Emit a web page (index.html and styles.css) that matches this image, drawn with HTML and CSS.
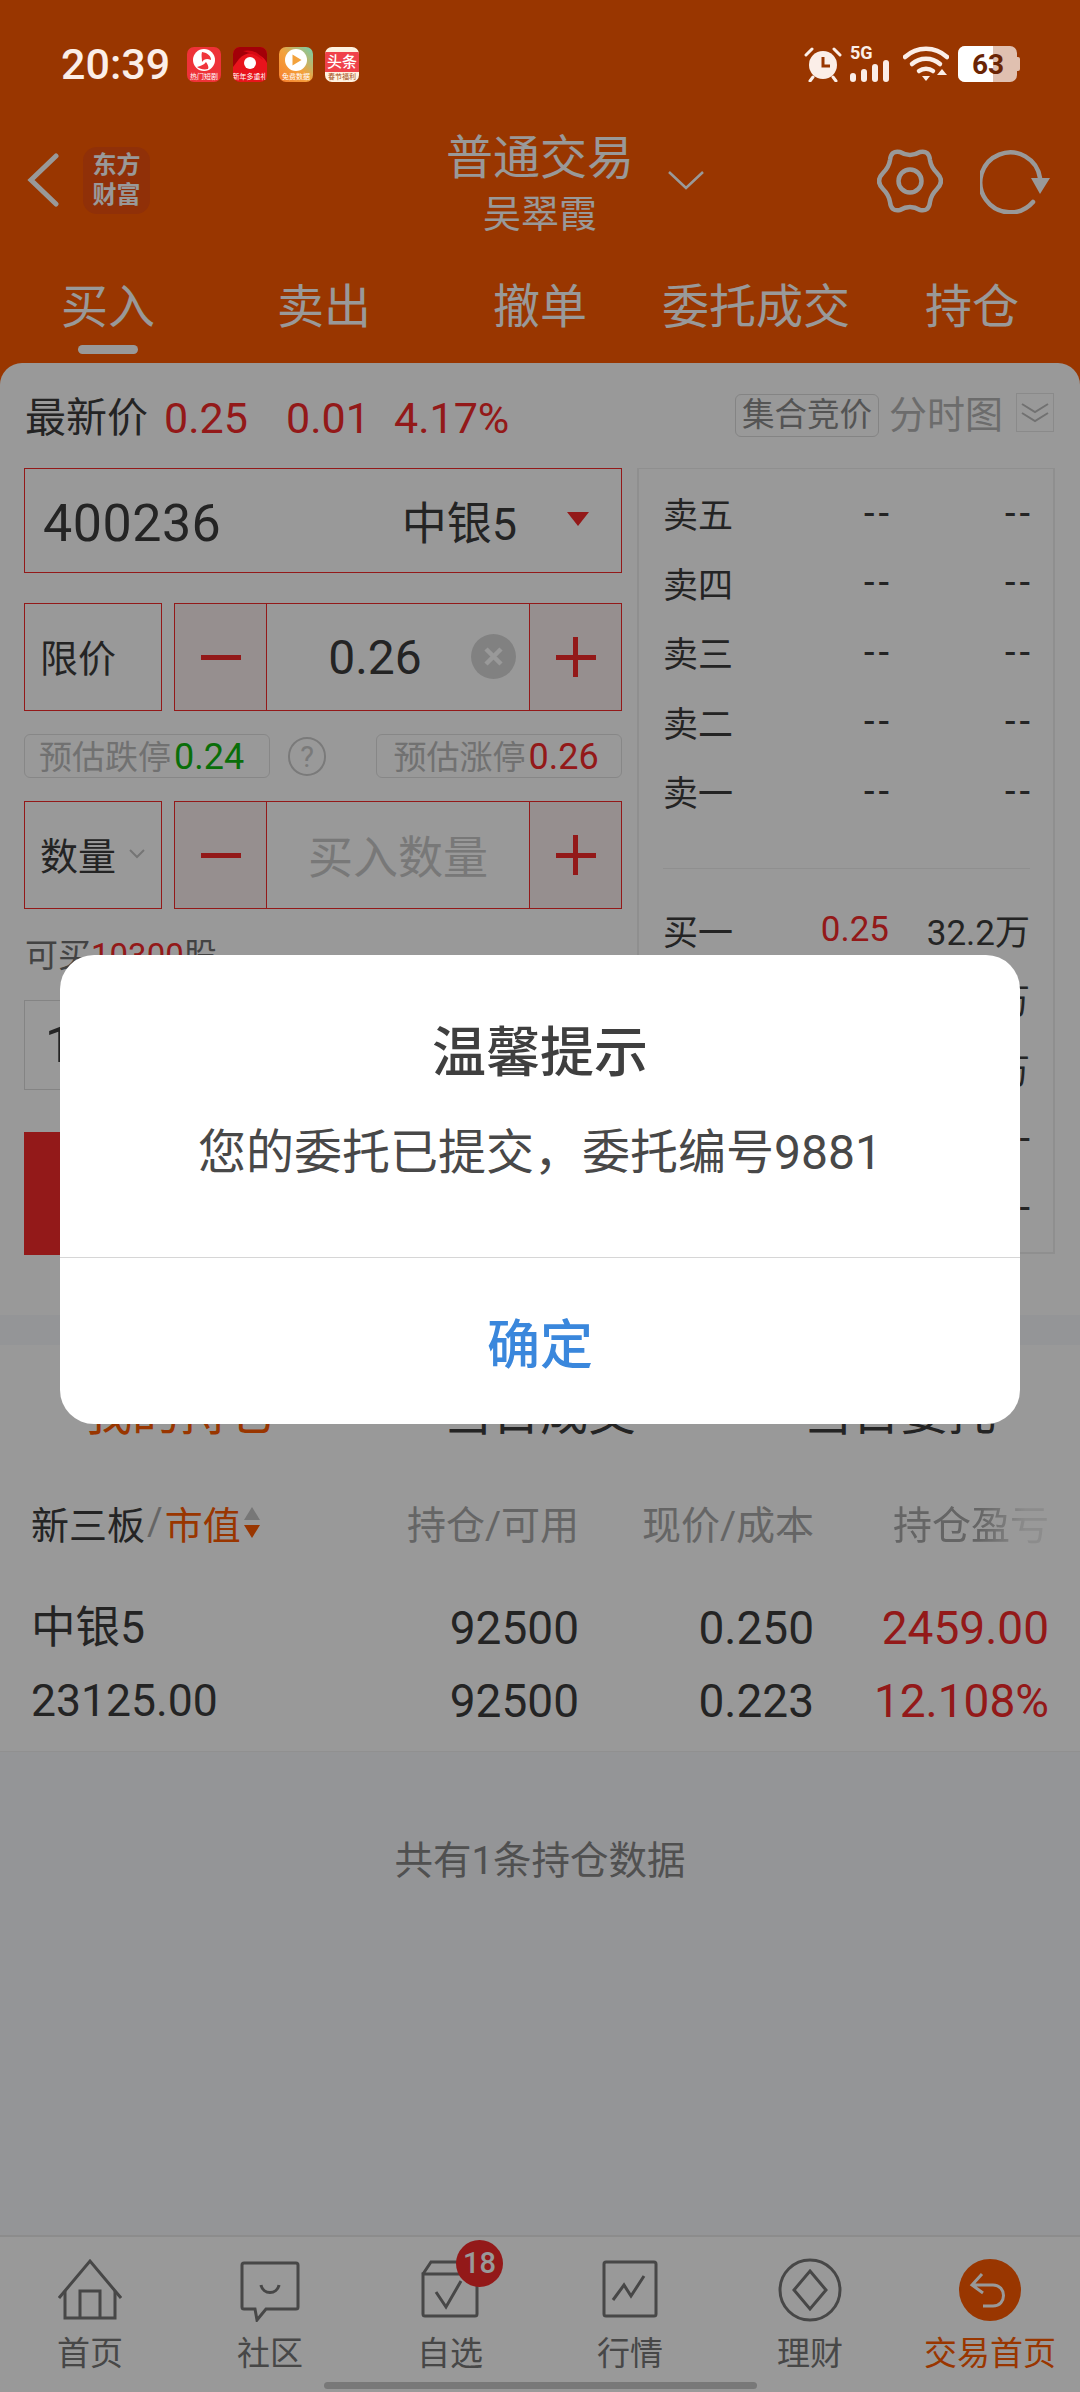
FILE: index.html
```html
<!DOCTYPE html>
<html lang="zh-CN">
<head>
  <meta charset="UTF-8" />
  <meta name="viewport" content="width=device-width, initial-scale=1.0"/>
  <title>普通交易</title>
  <link rel="stylesheet" href="styles.css">
</head>
<body>

<div class="screen">

  <div class="status">
    <span class="time">20:39</span>
    <div class="apps">
      <div class="app app-a">
        <svg viewBox="0 0 34 26" width="34" height="26"><circle cx="17" cy="13" r="11" fill="#fff"/><path d="M15 5c6 1 9 4 9 8-4-2-7-1-9 2 0-4-1-7 0-10zM10 20c3-1 7-2 9-5 2 3 3 5 2 7-4 1-8 0-11-2z" fill="#f0353b"/></svg>
        <span>热门短剧</span>
      </div>
      <div class="app app-b">
        <svg viewBox="0 0 34 26" width="34" height="26"><path d="M0 0h34v16C30 6 14 2 6 12L0 20z" fill="#a30008"/><path d="M10 4c8-2 16 1 20 9-6-5-13-7-20-9z" fill="#d80a14"/><circle cx="17" cy="16" r="6" fill="#fff"/></svg>
        <span>新年多重礼</span>
      </div>
      <div class="app app-c">
        <svg viewBox="0 0 34 26" width="34" height="26"><circle cx="17" cy="13" r="11" fill="#fff"/><path d="M13.500 7.500l9 5.500-9 5.500z" fill="#f3a23c"/></svg>
        <span>免费数据</span>
      </div>
      <div class="app app-d">
        <b>头条</b>
        <span>春节福利</span>
      </div>
    </div>
    <div class="sys">
      <svg class="alarm" viewBox="0 0 38 36" width="38" height="36">
        <circle cx="19" cy="19" r="14" fill="#fbeee8"/>
        <path d="M19 11v9h7" fill="none" stroke="#993600" stroke-width="3"/>
        <path d="M2 9l6-6M36 9l-6-6" stroke="#fbeee8" stroke-width="3" stroke-linecap="round"/>
        <path d="M9 31l-3 4M29 31l3 4" stroke="#fbeee8" stroke-width="3" stroke-linecap="round"/>
      </svg>
      <div class="signal">
        <span class="net">5G</span>
        <svg viewBox="0 0 40 22" width="40" height="22" fill="#fbeee8">
          <rect x="0" y="13" width="6" height="9" rx="3"/>
          <rect x="11" y="9" width="6" height="13" rx="3"/>
          <rect x="22" y="4" width="6" height="18" rx="3"/>
          <rect x="33" y="0" width="6" height="22" rx="3"/>
        </svg>
      </div>
      <svg class="wifi" viewBox="0 0 46 36" width="46" height="36" fill="none" stroke="#fbeee8" stroke-width="4.500" stroke-linecap="round">
        <path d="M2 11C14 0 32 0 44 11"/>
        <path d="M9 18c8-7 20-7 28 0"/>
        <path d="M16 25c4-3 10-3 14 0" />
        <path d="M19 30h8l-4 5z" fill="#fbeee8" stroke="none"/>
        <path d="M34 29l5-6 5 6z" fill="#fbeee8" stroke="none"/>
      </svg>
      <div class="battery"><div class="battery-level"></div><span>63</span></div>
    </div>
  </div>

  <header class="head">
    <div class="head-left">
      <svg viewBox="0 0 32 54" width="32" height="54" fill="none" stroke="#fff" stroke-width="5" stroke-linecap="round"><path d="M29 3L4 27l25 24"/></svg>
      <div class="logo">东方<br>财富</div>
    </div>
    <div class="head-title">
      <h1>普通交易</h1>
      <p>吴翠霞</p>
    </div>
    <div class="head-right">
      <svg class="drop" viewBox="0 0 36 20" width="36" height="20" fill="none" stroke="#fff" stroke-width="2.500"><path d="M1 2l17 16L35 2"/></svg>
      <svg class="gear" viewBox="0 0 66 66" width="66" height="66" fill="none" stroke="#fff" stroke-width="4.500">
        <path d="M33 7Q38 7 43 4Q52 2 53 12Q54 19 60 25Q68 33 60 41Q54 47 53 54Q52 64 43 62Q38 59 33 59Q28 59 23 62Q14 64 13 54Q12 47 6 41Q-2 33 6 25Q12 19 13 12Q14 2 23 4Q28 7 33 7Z"/>
        <circle cx="33" cy="33" r="11.500"/>
      </svg>
      <svg class="refresh" viewBox="0 0 72 66" width="72" height="66" fill="none" stroke="#fff" stroke-width="4.500" stroke-linecap="round">
        <path d="M53 54A30 30 0 1 1 60 30"/>
        <path d="M51 30h19l-10 16z" fill="#fff" stroke="none"/>
      </svg>
    </div>
  </header>

  <nav class="tabs">
    <a class="tab active">买入</a>
    <a class="tab">卖出</a>
    <a class="tab">撤单</a>
    <a class="tab">委托成交</a>
    <a class="tab">持仓</a>
  </nav>

  <section class="trade">
    <div class="quote">
      <span class="quote-label">最新价</span>
      <span class="red q1">0.25</span>
      <span class="red q2">0.01</span>
      <span class="red q3">4.17%</span>
      <span class="auction">集合竞价</span>
      <span class="timeline">分时图</span>
      <span class="collapse">
        <svg viewBox="0 0 30 24" width="30" height="24" fill="none" stroke="#bdbdbd" stroke-width="2"><path d="M2 3l13 8 13-8M2 12l13 8 13-8"/></svg>
      </span>
    </div>

    <div class="trade-body">
      <div class="form">
        <div class="stock">
          <span class="code">400236</span>
          <span class="stock-name">中银5</span>
          <i class="caret"></i>
        </div>

        <div class="line">
          <div class="kind">限价</div>
          <div class="stepper">
            <div class="step"><i class="minus"></i></div>
            <div class="value">
              <span>0.26</span>
              <svg class="clear" viewBox="0 0 45 45" width="45" height="45"><circle cx="22.500" cy="22.500" r="22.500" fill="#d8d8d8"/><path d="M15 15l15 15M30 15L15 30" stroke="#fff" stroke-width="4.500"/></svg>
            </div>
            <div class="step"><i class="plus"></i></div>
          </div>
        </div>

        <div class="limits">
          <div class="limit">预估跌停<span class="green">0.24</span></div>
          <span class="help">?</span>
          <div class="limit limit-up">预估涨停<span class="red">0.26</span></div>
        </div>

        <div class="line">
          <div class="kind">数量
            <svg viewBox="0 0 16 10" width="16" height="10" fill="none" stroke="#c4c4c4" stroke-width="2"><path d="M1 1l7 7 7-7"/></svg>
          </div>
          <div class="stepper">
            <div class="step"><i class="minus"></i></div>
            <div class="value placeholder"><span>买入数量</span></div>
            <div class="step"><i class="plus"></i></div>
          </div>
        </div>

        <p class="can-buy">可买<span class="red">10300</span>股</p>
        <div class="amount">1</div>
        <div class="buy-btn"></div>
      </div>

      <div class="book">
        <div class="book-row"><span>卖五</span><span class="dash">--</span><span class="dash">--</span></div>
        <div class="book-row"><span>卖四</span><span class="dash">--</span><span class="dash">--</span></div>
        <div class="book-row"><span>卖三</span><span class="dash">--</span><span class="dash">--</span></div>
        <div class="book-row"><span>卖二</span><span class="dash">--</span><span class="dash">--</span></div>
        <div class="book-row"><span>卖一</span><span class="dash">--</span><span class="dash">--</span></div>
        <div class="book-line"></div>
        <div class="book-row"><span>买一</span><span class="red">0.25</span><span>32.2万</span></div>
        <div class="book-row"><span>买二</span><span class="red">0.24</span><span>万</span></div>
        <div class="book-row"><span>买三</span><span class="red">0.23</span><span>万</span></div>
        <div class="book-row"><span>买四</span><span class="dash">--</span><span class="dash">--</span></div>
        <div class="book-row"><span>买五</span><span class="dash">--</span><span class="dash">--</span></div>
      </div>
    </div>
  </section>

  <div class="band"></div>

  <section class="holdings">
    <div class="sub-tabs">
      <span class="orange">我的持仓</span>
      <span>当日成交</span>
      <span>当日委托</span>
    </div>
    <div class="table-row table-head">
      <div class="market">新三板<em>/</em><span class="orange">市值</span><span class="sort"><i class="up"></i><i class="down"></i></span></div>
      <div>持仓/可用</div>
      <div>现价/成本</div>
      <div class="fade">持仓盈亏</div>
    </div>
    <div class="table-row data-row">
      <div class="name">中银5</div>
      <div>92500</div>
      <div>0.250</div>
      <div class="red">2459.00</div>
    </div>
    <div class="table-row data-row">
      <div>23125.00</div>
      <div>92500</div>
      <div>0.223</div>
      <div class="red">12.108%</div>
    </div>
  </section>

  <div class="footnote">共有1条持仓数据</div>

  <footer class="bottom">
    <div class="nav-item">
      <svg viewBox="0 0 64 64" width="64" height="64" fill="none" stroke="#777" stroke-width="3">
        <path d="M1 40L32 3l31 37"/>
        <path d="M7 33v27h50V33"/>
        <path d="M22 60V33h20v27"/>
      </svg>
      <span>首页</span>
    </div>
    <div class="nav-item">
      <svg viewBox="0 0 64 64" width="64" height="64" fill="none" stroke="#777" stroke-width="3">
        <path d="M6 5h52a2 2 0 0 1 2 2v42a2 2 0 0 1-2 2H28l-9 11-2-11H6a2 2 0 0 1-2-2V7a2 2 0 0 1 2-2z"/>
        <path d="M23 27c2 10 16 10 18 0"/>
      </svg>
      <span>社区</span>
    </div>
    <div class="nav-item">
      <svg viewBox="0 0 64 64" width="64" height="64" fill="none" stroke="#777" stroke-width="3">
        <path d="M5 16v40a2 2 0 0 0 2 2h50a2 2 0 0 0 2-2V16z"/>
        <path d="M5 16l8-12h30"/>
        <path d="M18 34l10 15 15-26"/>
      </svg>
      <b class="badge">18</b>
      <span>自选</span>
    </div>
    <div class="nav-item">
      <svg viewBox="0 0 64 64" width="64" height="64" fill="none" stroke="#777" stroke-width="3">
        <rect x="6" y="4" width="52" height="54" rx="2"/>
        <path d="M15 42l11-15 7 11 13-20"/>
      </svg>
      <span>行情</span>
    </div>
    <div class="nav-item">
      <svg viewBox="0 0 64 64" width="64" height="64" fill="none" stroke="#777" stroke-width="3">
        <circle cx="32" cy="32" r="30"/>
        <path d="M32 13l16 19-16 19-16-19z"/>
      </svg>
      <span>理财</span>
    </div>
    <div class="nav-item current">
      <svg viewBox="0 0 64 64" width="64" height="64">
        <circle cx="32" cy="32" r="31" fill="#ff5a00"/>
        <path d="M24 16L14 27l11 8M15 27h20c14 0 14 21 0 21H25" fill="none" stroke="#fff" stroke-width="3"/>
      </svg>
      <span>交易首页</span>
    </div>
    <div class="home-bar"></div>
  </footer>

  <div class="mask"></div>

  <div class="dialog">
    <h2>温馨提示</h2>
    <p>您的委托已提交，委托编号9881</p>
    <button class="dialog-ok">确定</button>
  </div>

</div>

</body>
</html>
```

FILE: styles.css
```css
* {
  box-sizing: border-box;
}

body {
  margin: 0;
  font-family: Roboto, 'Noto Sans CJK SC', sans-serif;
  color: #3c3c3c;
}

.screen {
  position: relative;
  width: 1080px;
  height: 2392px;
  overflow: hidden;
  display: flex;
  flex-direction: column;
  background: #ff5a00;
}

.red {
  color: #f52a2a;
}

.green {
  color: #0fb80f;
}

.orange {
  color: #ff5a00;
}

/* status bar stays bright above the mask */
.status {
  position: relative;
  z-index: 3;
  height: 126px;
  flex: none;
  display: flex;
  align-items: flex-start;
  padding: 44px 60px 0 61px;
  color: #fbeee8;
}

.time {
  font-size: 43px;
  font-weight: 500;
  line-height: 40px;
}

.apps {
  display: flex;
  gap: 12px;
  margin: 3px 0 0 17px;
}

.app {
  width: 34px;
  height: 35px;
  border-radius: 7px;
  overflow: hidden;
  display: flex;
  flex-direction: column;
  align-items: center;
}

.app svg {
  display: block;
  flex: none;
}

.app span {
  font-size: 7px;
  line-height: 9px;
  color: #fff;
  white-space: nowrap;
}

.app-a {
  background: #ee3238;
}

.app-b {
  background: #e8141c;
}

.app-c {
  background: linear-gradient(45deg, #f77f2e 0%, #f3a23c 50%, #6fd1b0 100%);
}

.app-d {
  background: #fff2e0;
}

.app-d b {
  width: 100%;
  margin-top: 5px;
  background: #f0424a;
  color: #fff;
  font-size: 15px;
  font-weight: 500;
  line-height: 20px;
  text-align: center;
}

.app-d span {
  color: #a34b20;
  line-height: 10px;
}

.sys {
  display: flex;
  align-items: flex-end;
  margin-left: auto;
  height: 36px;
  margin-top: 2px;
}

.signal {
  display: flex;
  flex-direction: column;
  width: 42px;
  margin-left: 8px;
}

.signal span.net {
  font-size: 18px;
  font-weight: 700;
  line-height: 14px;
}

.wifi {
  margin-left: 11px;
}

.battery {
  position: relative;
  width: 59px;
  height: 36px;
  margin-left: 9px;
  margin-right: 3px;
  background: #e0c0b0;
  border-radius: 7px;
}

.battery::after {
  content: "";
  position: absolute;
  right: -3px;
  top: 11px;
  width: 3px;
  height: 14px;
  background: #e0c0b0;
  border-radius: 0 2px 2px 0;
}

.battery-level {
  width: 35px;
  height: 36px;
  background: #fff;
  border-radius: 7px 0 0 7px;
}

.battery span {
  position: absolute;
  left: 12px;
  top: 0;
  width: 36px;
  text-align: center;
  font-size: 28px;
  font-weight: 700;
  line-height: 38px;
  color: #6a2404;
}

/* header */
.head {
  flex: none;
  height: 130px;
  display: grid;
  grid-template-columns: 1fr auto 1fr;
  color: #fff;
}

.head-left {
  display: flex;
  align-items: center;
  padding: 0 0 22px 27px;
}

.logo {
  margin-left: 24px;
  width: 67px;
  height: 67px;
  border-radius: 14px;
  background: #f0500e;
  color: #fff;
  font-size: 24px;
  font-weight: 700;
  line-height: 30px;
  text-align: center;
  padding-top: 3px;
}

.head-title {
  text-align: center;
}

.head-title h1 {
  margin: 4px 0 0;
  font-size: 47px;
  font-weight: 400;
  line-height: 56px;
}

.head-title p {
  margin: 3px 0 0;
  font-size: 38px;
  line-height: 50px;
}

.head-right {
  display: flex;
  align-items: center;
  padding: 0 28px 0 0;
}

.drop {
  margin: 0 0 22px 34px;
}

.gear {
  margin: 0 0 20px auto;
}

.refresh {
  margin: 0 0 20px 37px;
}

.tabs {
  flex: none;
  height: 107px;
  display: flex;
  color: #fff;
}

.tab {
  position: relative;
  width: 216px;
  padding-top: 16px;
  text-align: center;
  font-size: 47px;
  line-height: 70px;
}

.tab.active::after {
  content: "";
  position: absolute;
  left: 78px;
  bottom: 9px;
  width: 60px;
  height: 9px;
  border-radius: 5px;
  background: #fff;
}

/* trade card */
.trade {
  flex: none;
  height: 952px;
  background: #fff;
  border-radius: 22px 22px 0 0;
}

.quote {
  height: 105px;
  display: flex;
  align-items: flex-start;
  padding: 30px 26px 0 25px;
  font-size: 43px;
  line-height: 50px;
}

.quote-label {
  width: 139px;
  font-size: 41px;
}

.q1 {
  width: 122px;
}

.q2 {
  width: 108px;
}

.auction {
  margin: 1px 0 0 auto;
  height: 43px;
  padding: 0 6px;
  font-size: 32.500px;
  line-height: 41px;
  border: 1px solid #dcdcdc;
  border-radius: 6px;
  color: #8c8c8c;
}

.timeline {
  margin-left: 10px;
  font-size: 38px;
  line-height: 44px;
  color: #b4b4b4;
}

.collapse {
  margin-left: 13px;
  width: 38px;
  height: 39px;
  border: 1px solid #e6e6e6;
  display: flex;
  align-items: center;
  justify-content: center;
}

.trade-body {
  display: flex;
  gap: 15px;
  padding: 0 25px 0 24px;
}

.form {
  width: 598px;
}

.stock {
  height: 105px;
  display: flex;
  align-items: center;
  padding: 0 32px 0 18px;
  border: 1px solid #f52a2a;
}

.code {
  margin-top: 5px;
  font-size: 52px;
  letter-spacing: 0.500px;
}

.stock-name {
  margin-left: auto;
  font-size: 45px;
}

.caret {
  margin: 0 0 4px 50px;
  border-left: 11px solid transparent;
  border-right: 11px solid transparent;
  border-top: 14px solid #f52a2a;
}

.line {
  display: flex;
  gap: 12px;
  height: 108px;
  margin-top: 30px;
}

.limits + .line {
  margin-top: 23px;
}

.kind {
  width: 138px;
  display: flex;
  align-items: center;
  gap: 13px;
  padding: 0 0 3px 15px;
  border: 1px solid #f52a2a;
  font-size: 38px;
  white-space: nowrap;
}

.stepper {
  flex: 1;
  display: flex;
  border: 1px solid #f52a2a;
}

.step {
  width: 91px;
  flex: none;
  background: #faeeee;
  display: flex;
  align-items: center;
  justify-content: center;
}

.step i {
  position: relative;
  display: block;
  width: 40px;
  height: 5px;
  background: #f52a2a;
}

.step .plus::after {
  content: "";
  position: absolute;
  left: 17.500px;
  top: -17.500px;
  width: 5px;
  height: 40px;
  background: #f52a2a;
}

.value {
  flex: 1;
  display: flex;
  align-items: center;
  justify-content: center;
  position: relative;
  border-left: 1px solid #f52a2a;
  border-right: 1px solid #f52a2a;
  font-size: 48px;
}

.clear {
  position: absolute;
  right: 13px;
  top: 30px;
}

.value > span {
  margin-left: -46px;
}

.placeholder {
  padding-bottom: 2px;
  font-size: 45px;
  color: #c8c8c8;
}

.placeholder > span {
  margin-left: 0;
}

.limits {
  display: flex;
  align-items: center;
  height: 44px;
  margin-top: 23px;
}

.limit {
  width: 246px;
  height: 44px;
  border: 1px solid #e2e2e2;
  border-radius: 6px;
  padding-left: 14px;
  font-size: 33px;
  line-height: 44px;
  color: #bcbcbc;
  white-space: nowrap;
}

.limit span {
  margin-left: 3px;
  font-size: 36px;
}

.limit-up {
  padding-left: 16px;
}

.help {
  width: 39px;
  height: 39px;
  margin: 0 50px 0 18px;
  border: 2px solid #cccccc;
  border-radius: 50%;
  color: #cccccc;
  font-size: 29px;
  line-height: 36px;
  text-align: center;
}

.can-buy {
  margin: 27px 0 0 1px;
  font-size: 33px;
  line-height: 40px;
  color: #707070;
}

.amount {
  height: 90px;
  margin-top: 24px;
  padding-left: 20px;
  border: 1px solid #dcdcdc;
  font-size: 50px;
  line-height: 88px;
}

.buy-btn {
  height: 123px;
  margin-top: 42px;
  background: #f52a2a;
}

.book {
  width: 418px;
  height: 786px;
  padding: 9px 23px 0 24px;
  border: 2px solid #eeeeee;
  border-width: 1px 2px 2px 2px;
}

.book-row {
  display: grid;
  grid-template-columns: 1fr 115px 141px;
  height: 69.500px;
  align-items: center;
  font-size: 35px;
  text-align: right;
}

.book-row span:first-child {
  text-align: left;
}

.dash {
  margin-right: -4px;
  font-size: 38px;
  letter-spacing: 4px;
}

.book-line {
  height: 1px;
  margin: 42px 0 26px;
  background: #eeeeee;
}

.band {
  flex: none;
  height: 30px;
  background: #f7f8fc;
}

/* holdings */
.holdings {
  flex: none;
  height: 407px;
  background: #fff;
  border-bottom: 1px solid #f0f0f0;
}

.sub-tabs {
  height: 135px;
  display: flex;
  padding-top: 39px;
  font-size: 48px;
  line-height: 60px;
}

.sub-tabs span {
  width: 360px;
  text-align: center;
  color: #3c3c3c;
}

.sub-tabs span.orange {
  color: #ff5a00;
}

.table-row {
  display: grid;
  grid-template-columns: 313px 235px 235px 235px;
  padding-left: 31px;
  text-align: right;
  align-items: center;
}

.table-row > div:first-child {
  text-align: left;
}

.table-head {
  height: 84px;
  margin-bottom: 28px;
  font-size: 39px;
  color: #a8a8a8;
  white-space: nowrap;
}

.market {
  display: flex;
  align-items: center;
  font-size: 38px;
  color: #3c3c3c;
}

.market em {
  font-style: normal;
  margin: 0 2px;
  color: #a8a8a8;
}

.sort {
  display: flex;
  flex-direction: column;
  gap: 5px;
  margin-left: 3px;
}

.sort i {
  display: block;
  border-left: 8px solid transparent;
  border-right: 8px solid transparent;
}

.sort .up {
  border-bottom: 13px solid #c6c6c6;
}

.sort .down {
  border-top: 13px solid #ff5a00;
}

.fade {
  -webkit-mask-image: linear-gradient(to right, #000 70%, rgba(0,0,0,0.25) 90%);
  mask-image: linear-gradient(to right, #000 70%, rgba(0,0,0,0.25) 90%);
}

.data-row {
  height: 73px;
  font-size: 46px;
  line-height: 73px;
}

.data-row > div:first-child {
  font-size: 44.500px;
}

.footnote {
  flex: none;
  height: 483px;
  padding-top: 84px;
  background: #f7f8fc;
  text-align: center;
  font-size: 38.500px;
  line-height: 50px;
  color: #858585;
}

/* bottom nav */
.bottom {
  position: relative;
  flex: 1;
  display: flex;
  background: #fff;
  border-top: 2px solid #eaeaea;
}

.nav-item {
  position: relative;
  width: 180px;
  padding-top: 21px;
  display: flex;
  flex-direction: column;
  align-items: center;
  font-size: 33px;
  line-height: 44px;
  color: #777;
}

.nav-item svg {
  display: block;
  margin-bottom: 10px;
}

.nav-item.current {
  color: #ff5a00;
}

.badge {
  position: absolute;
  left: 96px;
  top: 3px;
  width: 47px;
  height: 47px;
  border-radius: 50%;
  background: #f52a2a;
  color: #fff;
  font-size: 29px;
  font-weight: 500;
  line-height: 47px;
  text-align: center;
}

.home-bar {
  position: absolute;
  left: 324px;
  bottom: 3px;
  width: 433px;
  height: 7px;
  border-radius: 4px;
  background: #c8c8c8;
}

.mask {
  position: absolute;
  inset: 0;
  z-index: 2;
  background: rgba(0,0,0,0.4);
}

.dialog {
  position: absolute;
  left: 60px;
  top: 955px;
  z-index: 3;
  width: 960px;
  height: 469px;
  background: #fff;
  border-radius: 34px;
  text-align: center;
}

.dialog h2 {
  margin: 69px 0 0;
  font-size: 54px;
  font-weight: 500;
  line-height: 60px;
  color: #3f3f3f;
}

.dialog p {
  margin: 39px 0 0;
  height: 135px;
  font-size: 48px;
  line-height: 60px;
  color: #484848;
  border-bottom: 1px solid #d6d6d6;
}

.dialog-ok {
  display: block;
  width: 100%;
  height: 165px;
  border: none;
  background: none;
  font-family: inherit;
  font-size: 53px;
  font-weight: 500;
  color: #3a87dc;
}
```
